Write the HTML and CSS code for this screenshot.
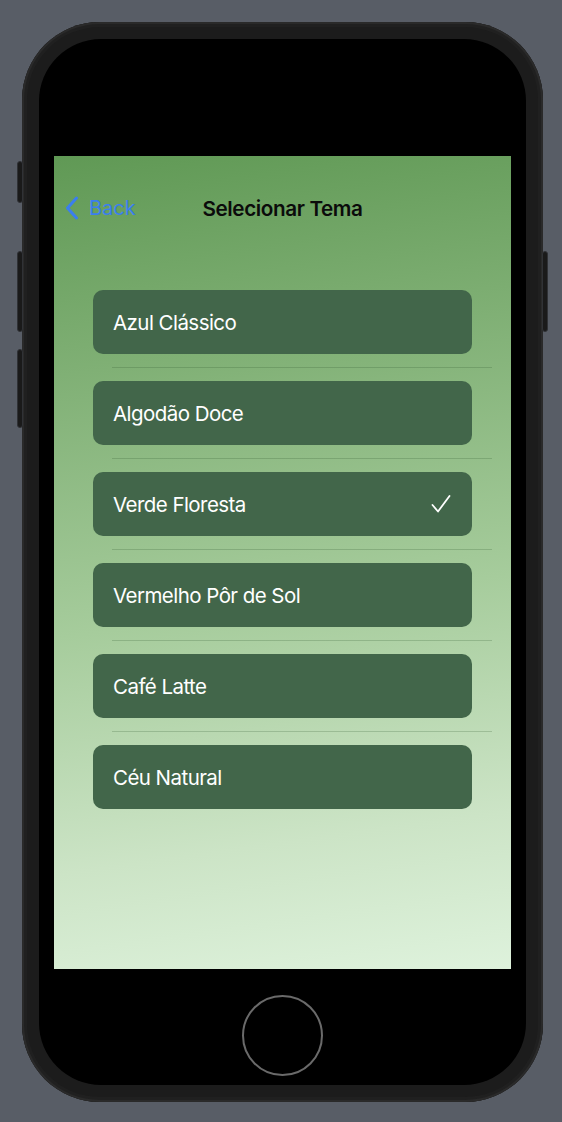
FILE: index.html
```html
<!DOCTYPE html>
<html lang="pt">
<head>
<meta charset="utf-8">
<link rel="stylesheet" href="styles.css">
</head>
<body>
<div class="device">
  <span class="btn btn-mute"></span>
  <span class="btn btn-vol1"></span>
  <span class="btn btn-vol2"></span>
  <span class="btn btn-power"></span>
  <div class="bezel">
    <div class="screen">
      <div class="nav">
        <div class="back">
          <svg class="chev" width="14" height="24" viewBox="0 0 14 24"><path d="M11.5 2 L2.5 12 L11.5 22" fill="none" stroke="#3a7ef0" stroke-width="3" stroke-linecap="round" stroke-linejoin="round"/></svg>
          <span>Back</span>
        </div>
        <div class="title">Selecionar Tema</div>
      </div>
      <ul class="list">
        <li class="cell"><div class="card">Azul Clássico</div></li>
        <li class="cell"><div class="card">Algodão Doce</div></li>
        <li class="cell"><div class="card">Verde Floresta<svg class="check" width="20" height="20" viewBox="0 0 20 20"><path d="M1.5 11 L7 17.5 L18.5 2" fill="none" stroke="#fff" stroke-width="1.8" stroke-linecap="round" stroke-linejoin="round"/></svg></div></li>
        <li class="cell"><div class="card">Vermelho Pôr de Sol</div></li>
        <li class="cell"><div class="card">Café Latte</div></li>
        <li class="cell"><div class="card">Céu Natural</div></li>
      </ul>
    </div>
    <div class="home"></div>
  </div>
</div>
</body>
</html>
```
FILE: styles.css
```css
html, body {
  margin: 0;
  padding: 0;
}
body {
  background: #585d66;
  width: 562px;
  height: 1122px;
  padding: 22px 0 0 22px;
  box-sizing: border-box;
  font-family: Inter, "Noto Sans", sans-serif;
}
.device {
  position: relative;
  width: 521px;
  height: 1080px;
  padding: 17px;
  box-sizing: border-box;
  background: #1c1c1c;
  border-radius: 78px;
  box-shadow: inset 0 0 0 2px #2a2a2a, inset 0 0 0 5px #202020;
}
.btn {
  position: absolute;
  width: 6px;
  background: #1a1a1a;
  border: 1px solid #303236;
  border-radius: 3px;
  box-sizing: border-box;
}
.btn-mute { left: -5px; top: 139px; height: 42px; }
.btn-vol1 { left: -5px; top: 229px; height: 81px; }
.btn-vol2 { left: -5px; top: 327px; height: 79px; }
.btn-power { right: -5px; top: 229px; height: 81px; }
.bezel {
  height: 100%;
  background: #000;
  border-radius: 62px;
  padding: 117px 15px 0;
  box-sizing: border-box;
}
.screen {
  width: 457px;
  height: 813px;
  background: linear-gradient(172deg, #609955 0%, #7cad71 22%, #a6cc9c 55%, #cce4c6 82%, #def2dc 100%);
  padding-top: 30px;
  box-sizing: border-box;
}
.nav {
  height: 44px;
  display: flex;
  align-items: center;
  justify-content: center;
  position: relative;
}
.back {
  position: absolute;
  left: 11px;
  top: 10px;
  display: flex;
  align-items: center;
  gap: 10px;
  color: #3a7ef0;
  font-size: 20px;
}
.chev { display: block; }
.title {
  font-size: 20.7px;
  font-weight: 600;
  color: #0b0b0b;
  letter-spacing: -0.4px;
}
.list {
  list-style: none;
  margin: 47px 19px 0 39px;
  padding: 0;
}
.cell {
  padding: 13px 0;
  position: relative;
}
.cell + .cell::before {
  content: "";
  position: absolute;
  top: -1px;
  left: 19px;
  right: 0;
  height: 1px;
  background: rgba(40, 80, 40, 0.22);
}
.cell + .cell { margin-top: 1px; }
.card {
  width: 379px;
  height: 64px;
  background: #42664a;
  border-radius: 10px;
  color: #fff;
  font-size: 20.5px;
  letter-spacing: -0.55px;
  display: flex;
  align-items: center;
  justify-content: space-between;
  padding: 0 20px;
  box-sizing: border-box;
}
.check { display: block; margin-right: 1px; }
.home {
  width: 81px;
  height: 81px;
  margin: 26px auto 0;
  border: 2.5px solid #6a6a6a;
  border-radius: 50%;
  box-sizing: border-box;
}
```
